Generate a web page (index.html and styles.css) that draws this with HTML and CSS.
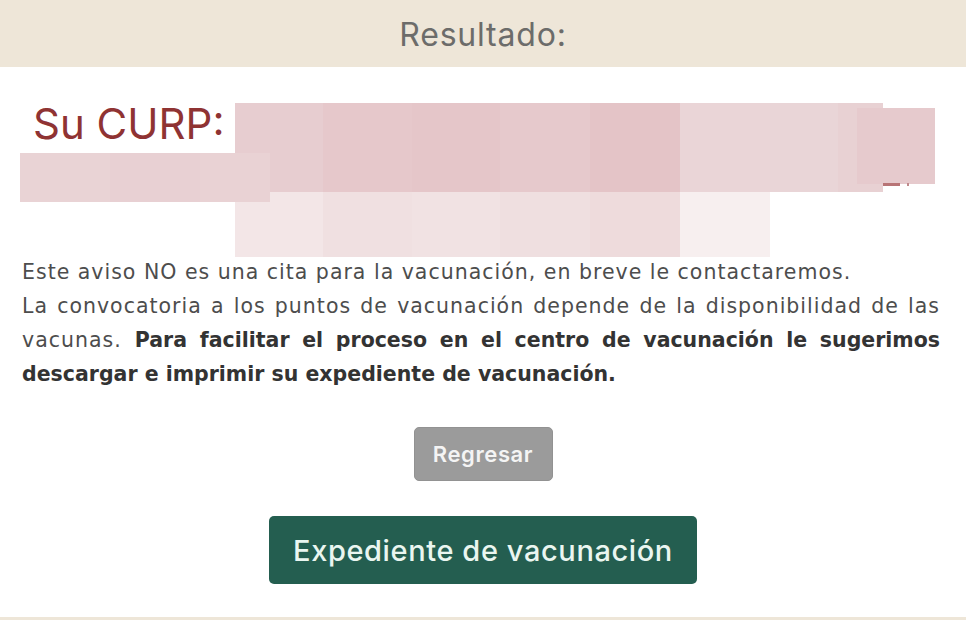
FILE: index.html
```html
<!DOCTYPE html>
<html lang="es">
<head>
<meta charset="utf-8">
<title>Resultado</title>
<link rel="stylesheet" href="styles.css">
</head>
<body>
<div class="page">
  <header class="result-header">Resultado:</header>

  <section class="curp">
    <h2 class="curp-title">Su CURP:</h2>
    <div class="redaction" aria-hidden="true">
      <span class="px" style="left:235px;top:36px;width:88px;height:89px;background:#e7cdd0"></span>
      <span class="px" style="left:323px;top:36px;width:89px;height:89px;background:#e6c8cb"></span>
      <span class="px" style="left:412px;top:36px;width:88px;height:89px;background:#e5c6c9"></span>
      <span class="px" style="left:500px;top:36px;width:90px;height:89px;background:#e6c9cc"></span>
      <span class="px" style="left:590px;top:36px;width:90px;height:89px;background:#e4c4c7"></span>
      <span class="px" style="left:680px;top:36px;width:90px;height:89px;background:#ead5d7"></span>
      <span class="px" style="left:770px;top:36px;width:68px;height:89px;background:#e9d5d7"></span>
      <span class="px" style="left:838px;top:36px;width:45px;height:89px;background:#e8d1d3"></span>
      <span class="px" style="left:857px;top:41px;width:78px;height:76px;background:#e6cacd"></span>
      <span class="px" style="left:883px;top:116px;width:17px;height:3px;background:#b87476"></span>
      <span class="px" style="left:907px;top:116px;width:2px;height:3px;background:#c08a8c"></span>

      <span class="px" style="left:235px;top:125px;width:88px;height:65px;background:#f3e6e7"></span>
      <span class="px" style="left:323px;top:125px;width:89px;height:65px;background:#f0e0e1"></span>
      <span class="px" style="left:412px;top:125px;width:88px;height:65px;background:#f1e2e3"></span>
      <span class="px" style="left:500px;top:125px;width:90px;height:65px;background:#efdfe0"></span>
      <span class="px" style="left:590px;top:125px;width:90px;height:65px;background:#eedbdc"></span>
      <span class="px" style="left:680px;top:125px;width:90px;height:65px;background:#f7efef"></span>

      <span class="px" style="left:20px;top:86px;width:90px;height:49px;background:#e9d3d5"></span>
      <span class="px" style="left:110px;top:86px;width:90px;height:49px;background:#e8d0d3"></span>
      <span class="px" style="left:200px;top:86px;width:70px;height:49px;background:#e9d2d4"></span>
    </div>
  </section>

  <div class="notice">
    <p class="notice-line">Este aviso NO es una cita para la vacunación, en breve le contactaremos.</p>
    <p class="notice-body">
      <span class="jline">La convocatoria a los puntos de vacunación depende de la disponibilidad de las</span>
      <span class="jline">vacunas. <strong>Para facilitar el proceso en el centro de vacunación le sugerimos</strong></span>
      <span class="lline"><strong>descargar e imprimir su expediente de vacunación.</strong></span>
    </p>
  </div>

  <div class="actions">
    <button class="btn btn-back" type="button">Regresar</button>
    <button class="btn btn-record" type="button">Expediente de vacunación</button>
  </div>

  <div class="footer-line"></div>
</div>
</body>
</html>
```

FILE: styles.css
```css
* { box-sizing: border-box; }

html, body {
  margin: 0;
  padding: 0;
  background: #ffffff;
}

body {
  font-family: Inter, "Open Sans", "DejaVu Sans", sans-serif;
  width: 966px;
  height: 620px;
  overflow: hidden;
}

.page {
  display: flex;
  flex-direction: column;
  height: 620px;
}

.result-header {
  height: 67px;
  background: #eee6d8;
  display: flex;
  align-items: center;
  justify-content: center;
  font-size: 32px;
  font-weight: 400;
  color: #6c6c6a;
  letter-spacing: 0.8px;
  padding-top: 2px;
}

.curp {
  position: relative;
  height: 188px;
}

.curp-title {
  margin: 32px 0 0 33px;
  font-size: 42px;
  line-height: 50px;
  font-weight: 400;
  color: #8f3333;
  letter-spacing: 0px;
}

.redaction {
  position: absolute;
  inset: 0;
}

.px {
  position: absolute;
  display: block;
}

.notice {
  padding: 0 26px 0 22px;
  color: #4d4d4d;
  font-family: "DejaVu Sans", Inter, sans-serif;
  font-size: 20.5px;
  letter-spacing: 1px;
  line-height: 34px;
}

.notice p {
  margin: 0;
}

.notice-body span {
  display: block;
}

.jline {
  text-align: justify;
  text-align-last: justify;
}

.lline {
  text-align: left;
}

.notice strong {
  font-weight: 700;
  color: #333333;
  letter-spacing: 0;
}

.actions {
  display: flex;
  flex-direction: column;
  align-items: center;
  padding-top: 36px;
  gap: 35px;
}

.btn {
  font-family: Inter, "Open Sans", "DejaVu Sans", sans-serif;
  border: none;
  cursor: pointer;
  display: flex;
  align-items: center;
  justify-content: center;
}

.btn-back {
  width: 139px;
  height: 54px;
  background: #9b9b9b;
  border: 1px solid #929292;
  border-radius: 5px;
  color: #f4f4f4;
  font-size: 22px;
  font-weight: 600;
  letter-spacing: 0.6px;
}

.btn-record {
  width: 428px;
  height: 68px;
  background: #245e50;
  border-radius: 5px;
  color: #eaf6f0;
  font-size: 29px;
  font-weight: 500;
  letter-spacing: 0.6px;
}

.footer-line {
  margin-top: auto;
  height: 3px;
  background: #eee6d8;
}
```
